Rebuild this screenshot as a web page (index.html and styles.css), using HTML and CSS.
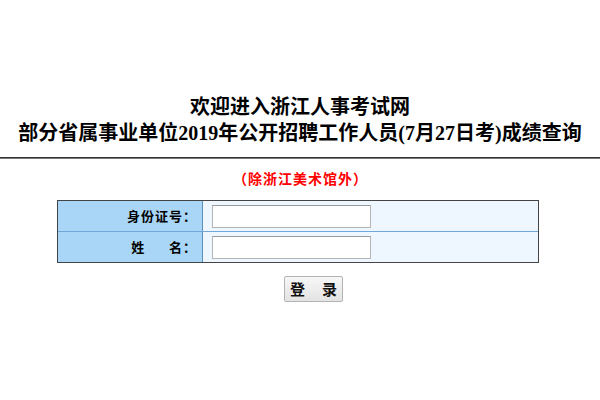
FILE: index.html
```html
<!DOCTYPE html>
<html lang="zh-CN">
<head>
<meta charset="utf-8">
<title>浙江人事考试网</title>
<link rel="stylesheet" href="styles.css">
</head>
<body>
<div class="page">
  <div class="title">
    <div class="line">欢迎进入浙江人事考试网</div>
    <div class="line">部分省属事业单位2019年公开招聘工作人员(7月27日考)成绩查询</div>
  </div>
  <div class="rule"></div>
  <div class="note">（除浙江美术馆外）</div>
  <form class="form">
    <div class="row">
      <div class="label">身份证号：</div>
      <div class="field"><input class="input" type="text"></div>
    </div>
    <div class="row last">
      <div class="label">姓&nbsp;&nbsp;&nbsp;&nbsp;&nbsp;&nbsp;名：</div>
      <div class="field"><input class="input" type="text"></div>
    </div>
  </form>
  <div class="actions"><button class="btn" type="button">登<span class="gap"></span>录</button></div>
</div>
</body>
</html>
```
FILE: styles.css
```css
html, body {
  margin: 0;
  padding: 0;
  background: #fff;
}
.page {
  font-family: "Liberation Serif", "Noto Sans CJK SC", serif;
  color: #000;
}
.title {
  padding-top: 94px;
  text-align: center;
  font-size: 20px;
  font-weight: bold;
  line-height: 26px;
}
.rule {
  margin-top: 11px;
  height: 0;
  border-top: 1px solid #333;
  border-bottom: 1px solid #777;
}
.note {
  margin-top: 11px;
  text-align: center;
  font-family: "Noto Sans CJK SC", sans-serif;
  font-size: 14px;
  font-weight: bold;
  letter-spacing: 1px;
  padding-left: 1px;
  color: #f00;
  line-height: 16px;
}
.form {
  margin: 14px 0 0 57px;
  width: 482px;
  border: 1px solid #444;
  box-sizing: border-box;
  display: flex;
  flex-direction: column;
}
.row {
  display: flex;
  height: 30px;
  border-bottom: 1px solid #6fa8d8;
}
.row.last {
  border-bottom: none;
}
.label {
  width: 145px;
  flex: none;
  background: #a9d6f6;
  border-right: 1px solid #5d8fbd;
  text-align: right;
  padding-right: 5px;
  box-sizing: border-box;
  font-family: "Noto Sans CJK SC", sans-serif;
  font-size: 13px;
  font-weight: bold;
  letter-spacing: 1px;
  line-height: 30px;
}
.field {
  flex: 1;
  background: #eef6ff;
  display: flex;
  align-items: center;
  padding-left: 9px;
}
.input {
  width: 159px;
  height: 23px;
  box-sizing: border-box;
  border: 1px solid #b5b5b5;
  border-top-color: #999;
  background: #fff;
  margin: 0;
  padding: 0 2px;
}
.actions {
  margin-top: 13px;
  padding-left: 284px;
}
.btn {
  width: 59px;
  height: 26px;
  margin: 0;
  padding: 0;
  border: 1px solid #b3b3b3;
  border-radius: 2px;
  background: linear-gradient(#f7f7f7, #e3e3e3);
  font-family: "Noto Sans CJK SC", sans-serif;
  font-size: 15px;
  font-weight: bold;
  color: #111;
  line-height: 24px;
}
.gap {
  display: inline-block;
  width: 17px;
}
```
